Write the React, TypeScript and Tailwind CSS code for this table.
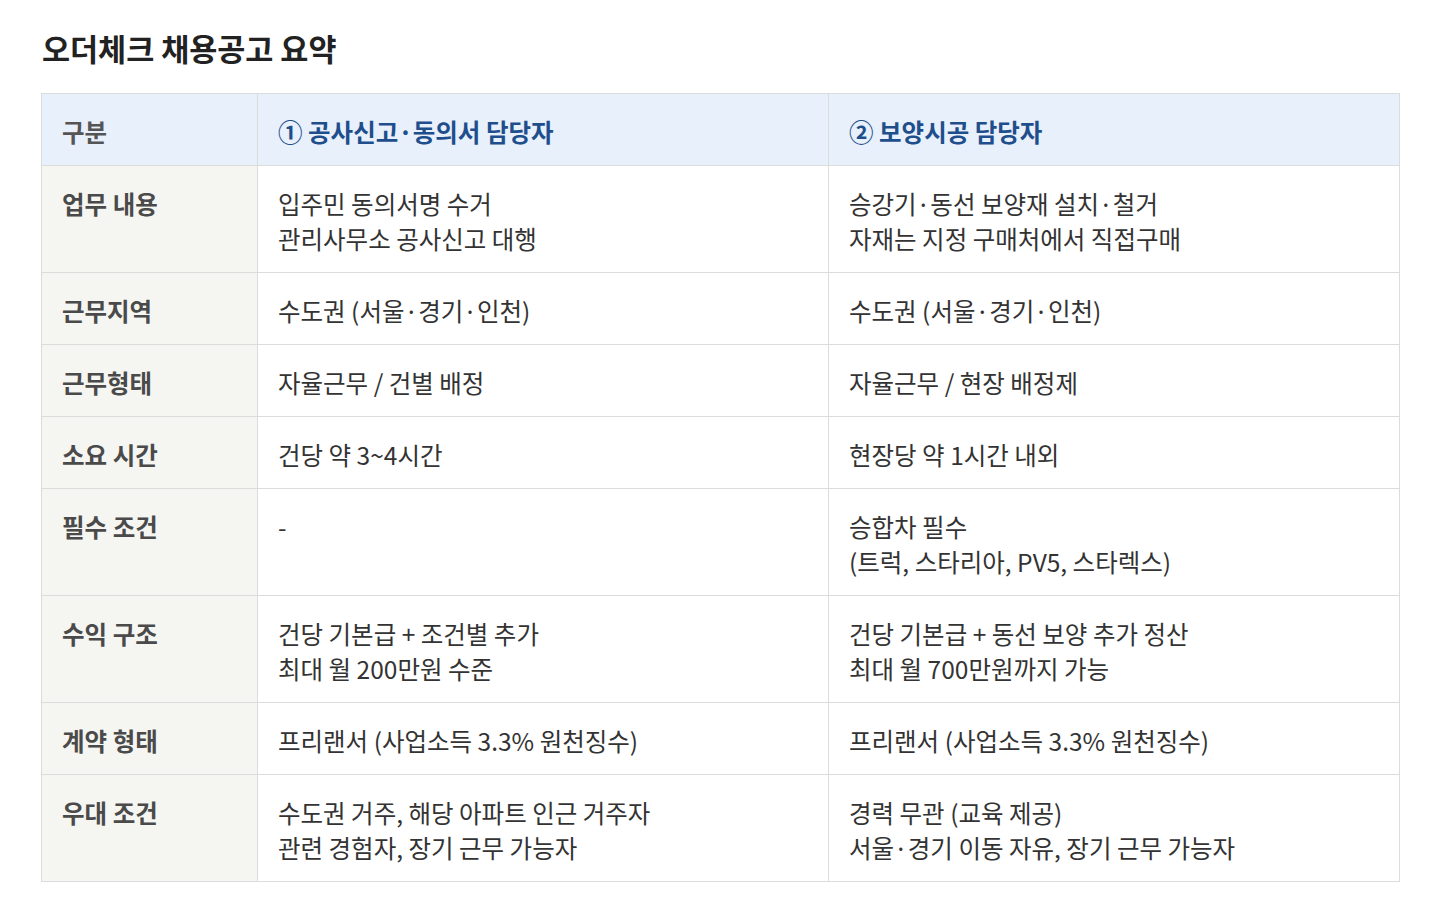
const rows: { label: string; a: string[]; b: string[] }[] = [
  {
    label: "업무 내용",
    a: ["입주민 동의서명 수거", "관리사무소 공사신고 대행"],
    b: ["승강기·동선 보양재 설치·철거", "자재는 지정 구매처에서 직접구매"],
  },
  { label: "근무지역", a: ["수도권 (서울·경기·인천)"], b: ["수도권 (서울·경기·인천)"] },
  { label: "근무형태", a: ["자율근무 / 건별 배정"], b: ["자율근무 / 현장 배정제"] },
  { label: "소요 시간", a: ["건당 약 3~4시간"], b: ["현장당 약 1시간 내외"] },
  {
    label: "필수 조건",
    a: ["-"],
    b: ["승합차 필수", "(트럭, 스타리아, PV5, 스타렉스)"],
  },
  {
    label: "수익 구조",
    a: ["건당 기본급 + 조건별 추가", "최대 월 200만원 수준"],
    b: ["건당 기본급 + 동선 보양 추가 정산", "최대 월 700만원까지 가능"],
  },
  {
    label: "계약 형태",
    a: ["프리랜서 (사업소득 3.3% 원천징수)"],
    b: ["프리랜서 (사업소득 3.3% 원천징수)"],
  },
  {
    label: "우대 조건",
    a: ["수도권 거주, 해당 아파트 인근 거주자", "관련 경험자, 장기 근무 가능자"],
    b: ["경력 무관 (교육 제공)", "서울·경기 이동 자유, 장기 근무 가능자"],
  },
]

export default function App() {
  return (
    <div
      className="min-h-screen bg-white px-[41px] pt-[28px]"
      style={{ fontFamily: '"Noto Sans CJK KR", "Noto Sans", sans-serif' }}
    >
      <h1 className="text-[30.5px] font-bold text-[#222] leading-[40px] mb-[25px] ml-px">
        오더체크 채용공고 요약
      </h1>

      <table className="w-[1358px] border-collapse table-fixed text-[24.5px] leading-[35px]">
        <colgroup>
          <col className="w-[216px]" />
          <col className="w-[571px]" />
          <col className="w-[571px]" />
        </colgroup>
        <thead>
          <tr className="bg-[#e8f0fb]">
            <th className="border border-[#dcdcdc] text-left font-bold text-[#555] px-[20px] pt-[20px] pb-[16px]">
              구분
            </th>
            <th className="border border-[#dcdcdc] text-left font-bold text-[#1f4e8c] px-[20px] pt-[20px] pb-[16px]">
              ① 공사신고·동의서 담당자
            </th>
            <th className="border border-[#dcdcdc] text-left font-bold text-[#1f4e8c] px-[20px] pt-[20px] pb-[16px]">
              ② 보양시공 담당자
            </th>
          </tr>
        </thead>
        <tbody>
          {rows.map((r) => (
            <tr key={r.label}>
              <td className="border border-[#dcdcdc] bg-[#f5f5f2] align-top font-bold text-[#4a4a4a] px-[20px] pt-[20px] pb-[16px]">
                {r.label}
              </td>
              <td className="border border-[#dcdcdc] align-top text-[#333] px-[20px] pt-[20px] pb-[16px]">
                {r.a.map((l) => (
                  <div key={l}>{l}</div>
                ))}
              </td>
              <td className="border border-[#dcdcdc] align-top text-[#333] px-[20px] pt-[20px] pb-[16px]">
                {r.b.map((l) => (
                  <div key={l}>{l}</div>
                ))}
              </td>
            </tr>
          ))}
        </tbody>
      </table>
    </div>
  )
}
